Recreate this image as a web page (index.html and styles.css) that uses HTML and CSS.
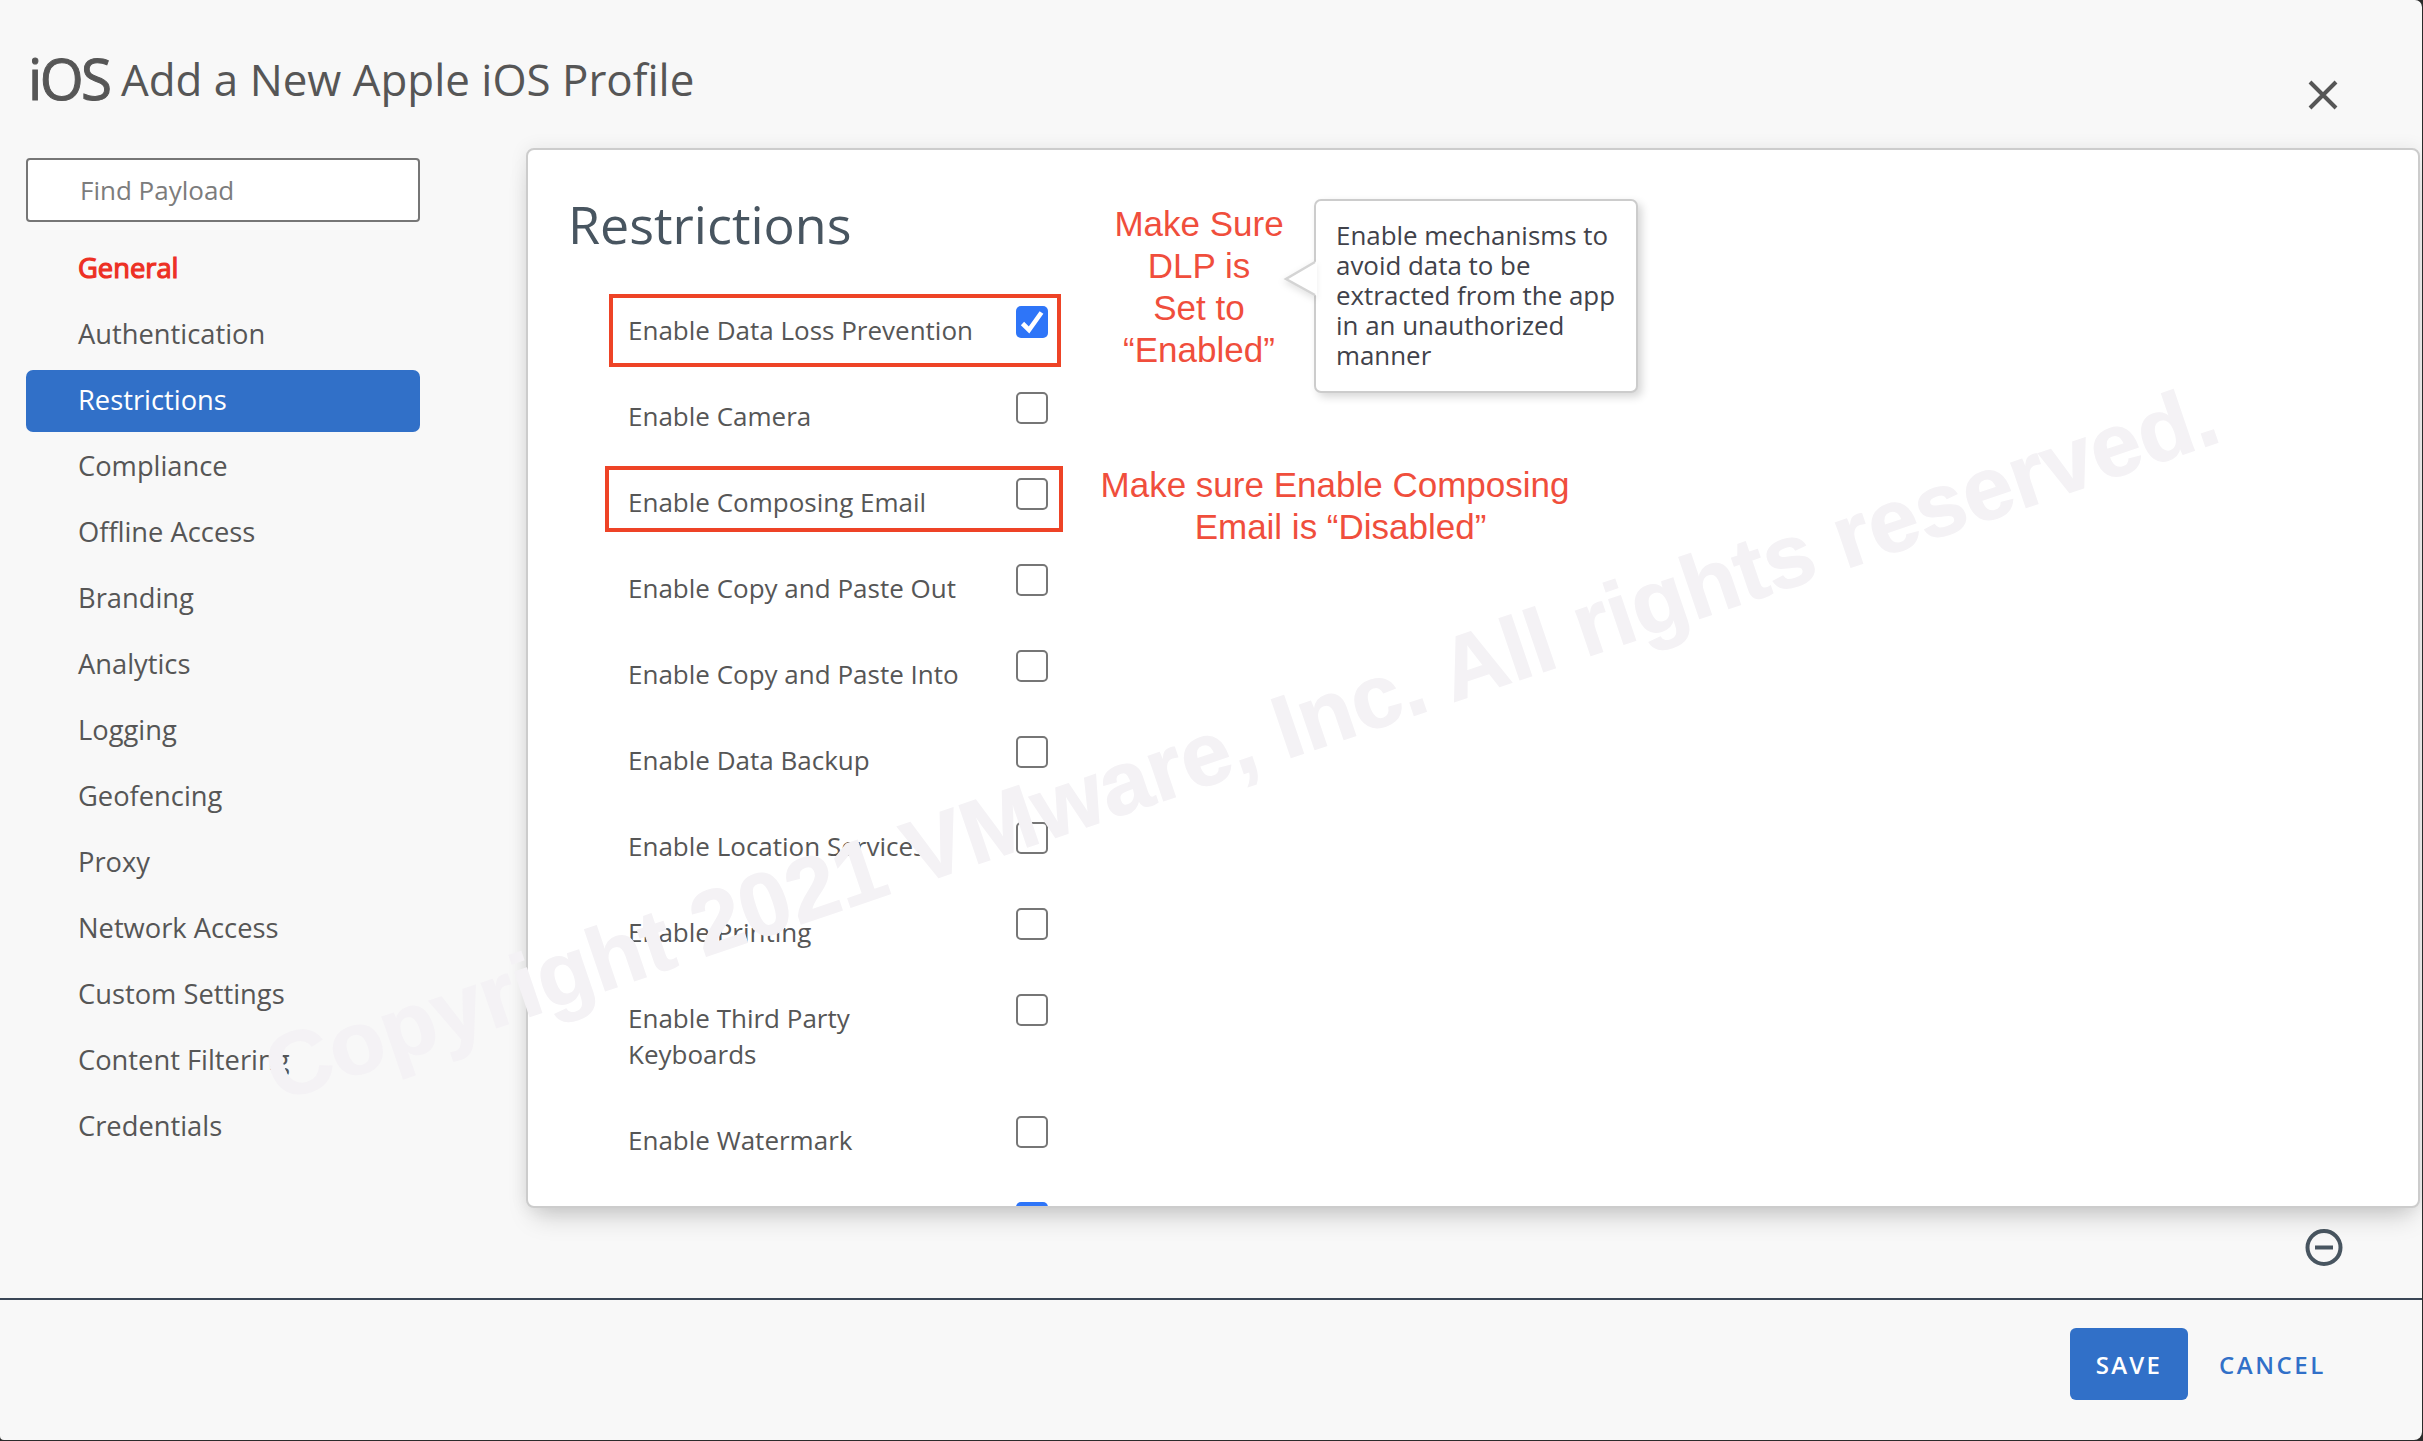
FILE: index.html
```html
<!DOCTYPE html>
<html lang="en">
<head>
<meta charset="utf-8">
<title>Add a New Apple iOS Profile</title>
<link rel="stylesheet" href="styles.css">
</head>
<body>
<div class="window">
  <header class="header">
    <span class="os-logo">iOS</span>
    <h1 class="title">Add a New Apple iOS Profile</h1>
    <button class="close" aria-label="Close">
      <svg width="30" height="30" viewBox="0 0 30 30"><path d="M2 2L28 28M28 2L2 28"/></svg>
    </button>
  </header>

  <div class="body">
    <nav class="sidebar">
      <input class="search" type="text" placeholder="Find Payload">
      <ul class="menu">
        <li class="item required">General</li>
        <li class="item">Authentication</li>
        <li class="item active">Restrictions</li>
        <li class="item">Compliance</li>
        <li class="item">Offline Access</li>
        <li class="item">Branding</li>
        <li class="item">Analytics</li>
        <li class="item">Logging</li>
        <li class="item">Geofencing</li>
        <li class="item">Proxy</li>
        <li class="item">Network Access</li>
        <li class="item">Custom Settings</li>
        <li class="item">Content Filtering</li>
        <li class="item">Credentials</li>
      </ul>
    </nav>

    <main class="content">
      <section class="panel">
        <h2 class="panel-title">Restrictions</h2>
        <div class="rows">
          <label class="row"><span class="label">Enable Data Loss Prevention</span><span class="check checked"><svg width="32" height="32" viewBox="0 0 32 32"><path d="M6.5 17.5L13 24L25.5 6.5"/></svg></span></label>
          <label class="row"><span class="label">Enable Camera</span><span class="check"></span></label>
          <label class="row"><span class="label">Enable Composing Email</span><span class="check"></span></label>
          <label class="row"><span class="label">Enable Copy and Paste Out</span><span class="check"></span></label>
          <label class="row"><span class="label">Enable Copy and Paste Into</span><span class="check"></span></label>
          <label class="row"><span class="label">Enable Data Backup</span><span class="check"></span></label>
          <label class="row"><span class="label">Enable Location Services</span><span class="check"></span></label>
          <label class="row"><span class="label">Enable Printing</span><span class="check"></span></label>
          <label class="row"><span class="label">Enable Third Party Keyboards</span><span class="check"></span></label>
          <label class="row"><span class="label">Enable Watermark</span><span class="check"></span></label>
          <label class="row"><span class="label"></span><span class="check checked"></span></label>
        </div>

        <div class="highlight highlight-dlp"></div>
        <div class="highlight highlight-email"></div>
        <p class="note note-dlp">Make Sure<br>DLP is<br>Set to<br>“Enabled”</p>
        <p class="note note-email">Make sure Enable Composing<br><span class="note-second">Email is “Disabled”</span></p>
        <div class="tooltip">
          <svg class="tooltip-arrow" width="34" height="42" viewBox="0 0 34 42"><path class="arrow-fill" d="M34 2L3 20L34 37Z"/><path class="arrow-edge" d="M32 3L3 20L32 36"/></svg>
          Enable mechanisms to avoid data to be extracted from the app in an unauthorized manner
        </div>
      </section>
      <button class="collapse" aria-label="Remove payload">
        <svg width="38" height="38" viewBox="0 0 38 38"><circle cx="19" cy="19.5" r="16.5"/><path d="M10 19.5H28"/></svg>
      </button>
    </main>
  </div>

  <footer class="footer">
    <button class="button primary">SAVE</button>
    <button class="button link">CANCEL</button>
  </footer>

  <svg class="watermark" width="2422" height="1440" viewBox="0 0 2422 1440"><text transform="translate(278 1102) rotate(-18.78)" x="0" y="0" textLength="2055" lengthAdjust="spacingAndGlyphs">Copyright 2021 VMware, Inc. All rights reserved.</text></svg>
</div>
</body>
</html>
```
FILE: styles.css
```css
* { box-sizing: border-box; }

html, body { height: 100%; }

body {
  margin: 0;
  background: #2b2b2b;
  color: #565656;
  font-family: "Open Sans", "Noto Sans", sans-serif;
  font-size: 26px;
  overflow: hidden;
}

h1, h2, p, ul { margin: 0; padding: 0; font-weight: 400; }

button { border: 0; padding: 0; background: none; font: inherit; display: block; }

svg { display: block; }

.window {
  position: relative;
  width: 2422px;
  height: 1440px;
  display: flex;
  flex-direction: column;
  background: #f8f8f8;
  border-radius: 0 7px 8px 4px;
  overflow: hidden;
}

/* Header */
.header {
  height: 148px;
  display: flex;
  align-items: flex-start;
  padding: 39px 84px 0 28px;
}

.os-logo {
  width: 84px;
  font-size: 56.5px;
  line-height: 80px;
  letter-spacing: -2.6px;
  -webkit-text-stroke: 1px #565656;
}

.title {
  flex: 1;
  margin: 10px 0 0 9px;
  font-size: 43.9px;
  line-height: 60px;
}

.close { margin-top: 41px; }

.close path, .collapse path, .collapse circle { fill: none; stroke-width: 4; }
.close path { stroke: #565656; }

/* Body */
.body {
  height: 1150px;
  display: flex;
  padding-left: 26px;
}

.sidebar { width: 394px; padding-top: 10px; margin-right: 106px; }

.search {
  display: block;
  width: 394px;
  height: 64px;
  padding: 0 50px 0 52px;
  border: 2px solid #767676;
  border-radius: 4px;
  background: #fff;
  font: inherit;
}

.search::placeholder { color: #7c7c7c; opacity: 1; }

.menu {
  list-style: none;
  margin-top: 16px;
  display: flex;
  flex-direction: column;
  gap: 4px;
}

.item {
  height: 62px;
  padding-left: 52px;
  border-radius: 7px;
  font-size: 27.3px;
  line-height: 60px;
}

.item.required { color: #ed3024; -webkit-text-stroke: 1.2px #ed3024; }
.item.active { background: #3170c8; color: #fff; }

.content { width: 1894px; }

.panel {
  position: relative;
  height: 1060px;
  padding: 37px 0 0 40px;
  border: 2px solid #ccc;
  border-radius: 8px;
  background: #fff;
  box-shadow: 0 16px 24px -8px rgba(0, 0, 0, .18), 0 0 18px rgba(0, 0, 0, .08);
}

.panel-title {
  color: #485560;
  font-size: 52px;
  line-height: 74px;
}

.rows {
  height: 900px;
  margin-top: 45px;
  margin-left: 60px;
  overflow: hidden;
}

.row {
  display: grid;
  grid-template-columns: 388px 32px;
  width: 420px;
}

.label {
  padding: 6px 40px 44px 0;
  min-height: 86px;
  line-height: 36px;
}

.check {
  width: 32px;
  height: 32px;
  border: 2px solid #767676;
  border-radius: 5px;
  background: #fff;
}

.check.checked { border: 0; background: #2e75f8; }

.check path { fill: none; stroke: #fff; stroke-width: 4.6; }

/* Annotations over the panel */
.highlight { position: absolute; border: 4px solid #ee4326; }
.highlight-dlp { left: 81px; top: 144px; width: 452px; height: 73px; }
.highlight-email { left: 77px; top: 316px; width: 458px; height: 66px; }

.note {
  position: absolute;
  color: #f04e3c;
  font-family: "Liberation Sans", Arial, sans-serif;
  font-size: 35px;
  line-height: 42px;
  text-align: center;
  white-space: nowrap;
}

.note-dlp { left: 571px; top: 53px; width: 200px; }
.note-email { left: 557px; top: 314px; width: 500px; }
.note-second { padding-left: 11px; }

.tooltip {
  position: absolute;
  left: 786px;
  top: 49px;
  width: 324px;
  height: 194px;
  padding: 19px 10px 0 20px;
  border: 2px solid #ccc;
  border-radius: 7px;
  background: #fff;
  box-shadow: 4px 4px 8px rgba(0, 0, 0, .16);
  color: #41424a;
  font-size: 25.9px;
  line-height: 30px;
}

.tooltip-arrow { position: absolute; left: -33px; top: 58px; filter: drop-shadow(-1px 3px 3px rgba(0, 0, 0, .1)); }
.arrow-fill { fill: #fff; }
.arrow-edge { fill: none; stroke: #d4d4d4; stroke-width: 2.5; }

.collapse { margin: 20px 77px 0 auto; }
.collapse path, .collapse circle { stroke: #485560; }

/* Footer */
.footer {
  height: 142px;
  display: flex;
  justify-content: flex-end;
  align-items: flex-start;
  gap: 31px;
  padding: 28px 96px 0 0;
  border-top: 2px solid #3a4656;
}

.button {
  height: 72px;
  padding-top: 2px;
  font-size: 24px;
  line-height: 70px;
  font-weight: 600;
  letter-spacing: 2.2px;
}

.primary { width: 118px; border-radius: 6px; background: #3170c8; color: #fff; }
.link { color: #3170c8; letter-spacing: 2.6px; }

/* Copyright mark over the whole window */
.watermark { position: absolute; left: 0; top: 0; pointer-events: none; }

.watermark text {
  font-family: "Liberation Sans", Arial, sans-serif;
  font-size: 89px;
  font-weight: 700;
  fill: #f4f2f5;
  stroke: #f4f2f5;
  stroke-width: 1.2;
}
```
